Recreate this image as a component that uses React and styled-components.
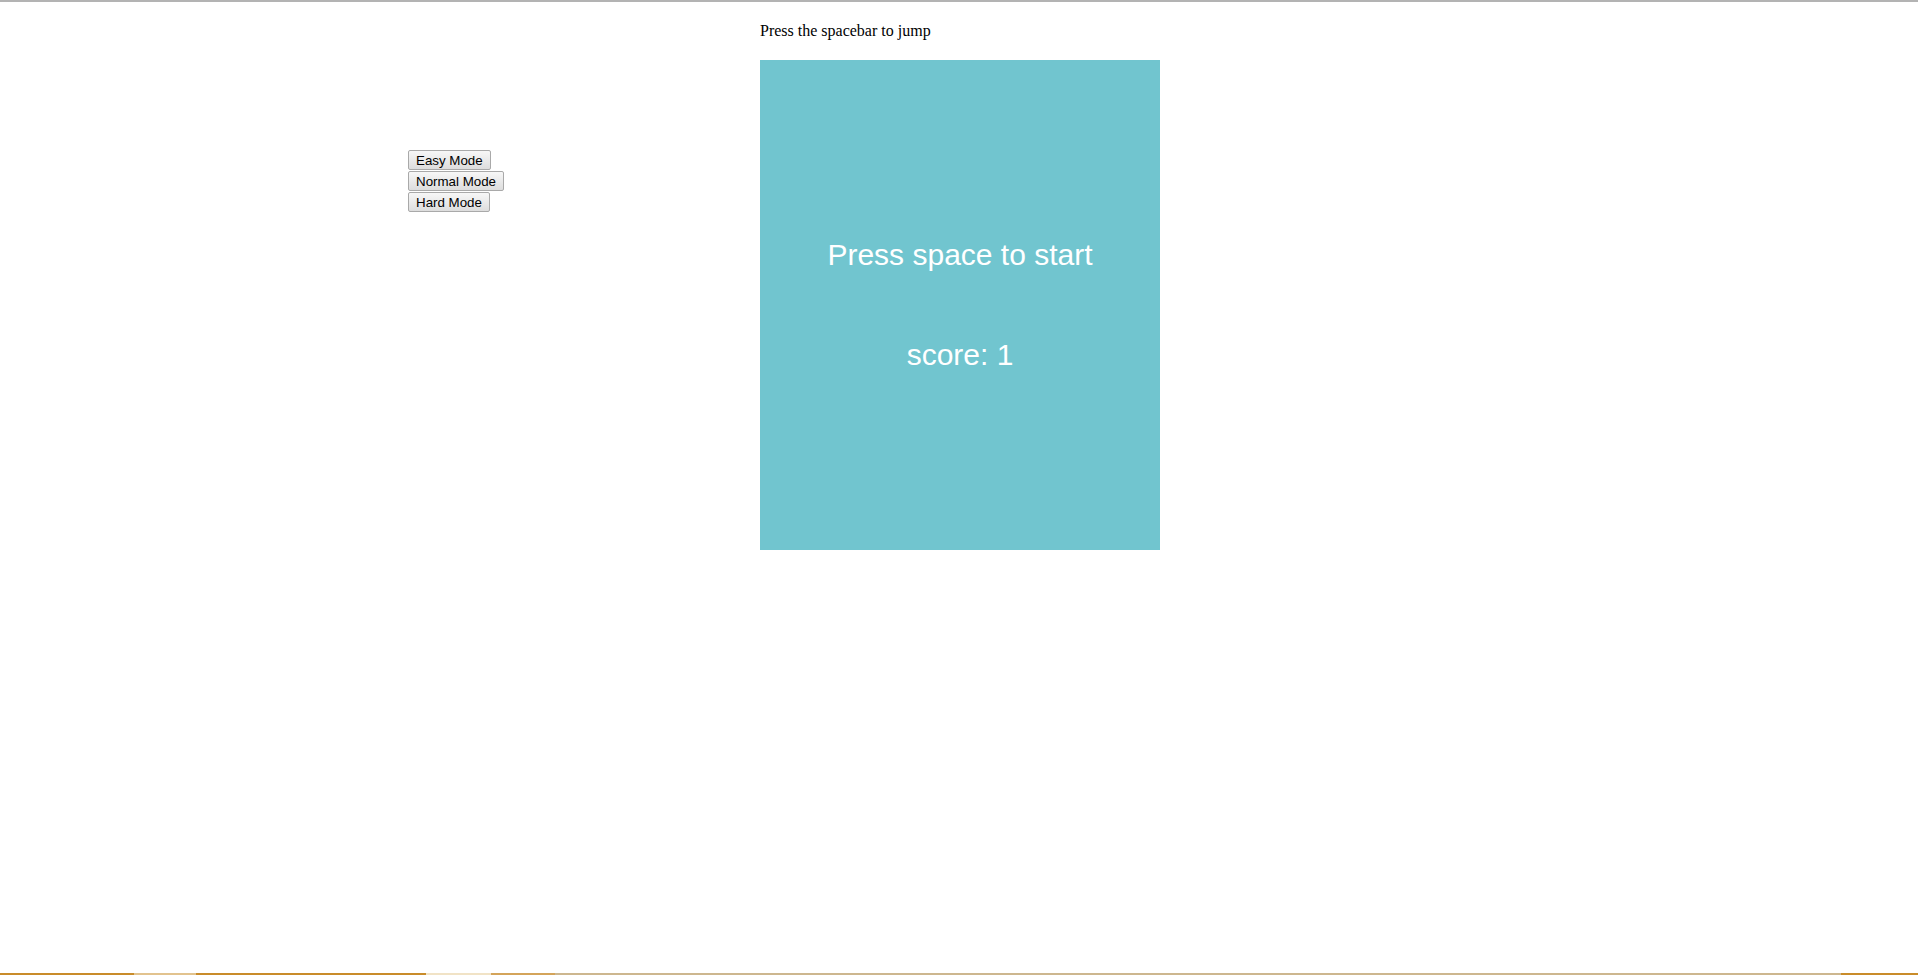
import React from "react";
import styled, { createGlobalStyle } from "styled-components";

const GlobalStyle = createGlobalStyle`
  html, body {
    margin: 0;
    padding: 0;
    background: #ffffff;
  }
  body {
    font-family: "Liberation Serif", "Times New Roman", serif;
    font-size: 16px;
    color: #000;
  }
`;

const Screen = styled.div`
  display: flex;
  flex-direction: column;
  height: 975px;
  border-top: 2px solid #b3b3b3;
  box-sizing: border-box;
`;

const Main = styled.main`
  flex: 1;
  display: flex;
  align-items: flex-start;
  padding: 20px 0 0 408px;
`;

const ModeList = styled.div`
  display: flex;
  flex-direction: column;
  align-items: flex-start;
  gap: 1px;
  width: 352px;
  margin-top: 128px;
`;

const ModeButton = styled.button`
  height: 20px;
  padding: 0 7px;
  font-family: "Liberation Sans", Arial, sans-serif;
  font-size: 13.33px;
  color: #000;
  background: linear-gradient(#f7f7f7, #dddddd);
  border: 1px solid #a9a9a9;
  border-radius: 2px;
  cursor: pointer;
`;

const GameColumn = styled.div`
  display: flex;
  flex-direction: column;
  width: 400px;
`;

const Hint = styled.p`
  margin: 0;
  line-height: 18px;
`;

const GameBox = styled.div`
  display: flex;
  flex-direction: column;
  align-items: center;
  gap: 66px;
  height: 490px;
  margin-top: 20px;
  padding-top: 178px;
  box-sizing: border-box;
  background: #71c5cf;
`;

const BoxText = styled.div`
  font-family: "Liberation Sans", Arial, sans-serif;
  font-size: 30px;
  line-height: 34px;
  color: #ffffff;
`;

const Taskbar = styled.div`
  display: flex;
  height: 2px;
`;

const Segment = styled.div`
  width: ${(p) => (p.$w ? `${p.$w}px` : "auto")};
  flex: ${(p) => (p.$w ? "none" : 1)};
  background: ${(p) => p.$c};
`;

const segments = [
  { w: 134, c: "#c98c2a" },
  { w: 62, c: "#e2c38e" },
  { w: 230, c: "#c98c2a" },
  { w: 65, c: "#f1e3c6" },
  { w: 64, c: "#d4a45a" },
  { c: "#cdb78f" },
  { w: 77, c: "#c98c2a" },
];

export default function App() {
  return (
    <>
      <GlobalStyle />
      <Screen>
        <Main>
          <ModeList>
            <ModeButton>Easy Mode</ModeButton>
            <ModeButton>Normal Mode</ModeButton>
            <ModeButton>Hard Mode</ModeButton>
          </ModeList>
          <GameColumn>
            <Hint>Press the spacebar to jump</Hint>
            <GameBox>
              <BoxText>Press space to start</BoxText>
              <BoxText>score: 1</BoxText>
            </GameBox>
          </GameColumn>
        </Main>
        <Taskbar>
          {segments.map((s, i) => (
            <Segment key={i} $w={s.w} $c={s.c} />
          ))}
        </Taskbar>
      </Screen>
    </>
  );
}
